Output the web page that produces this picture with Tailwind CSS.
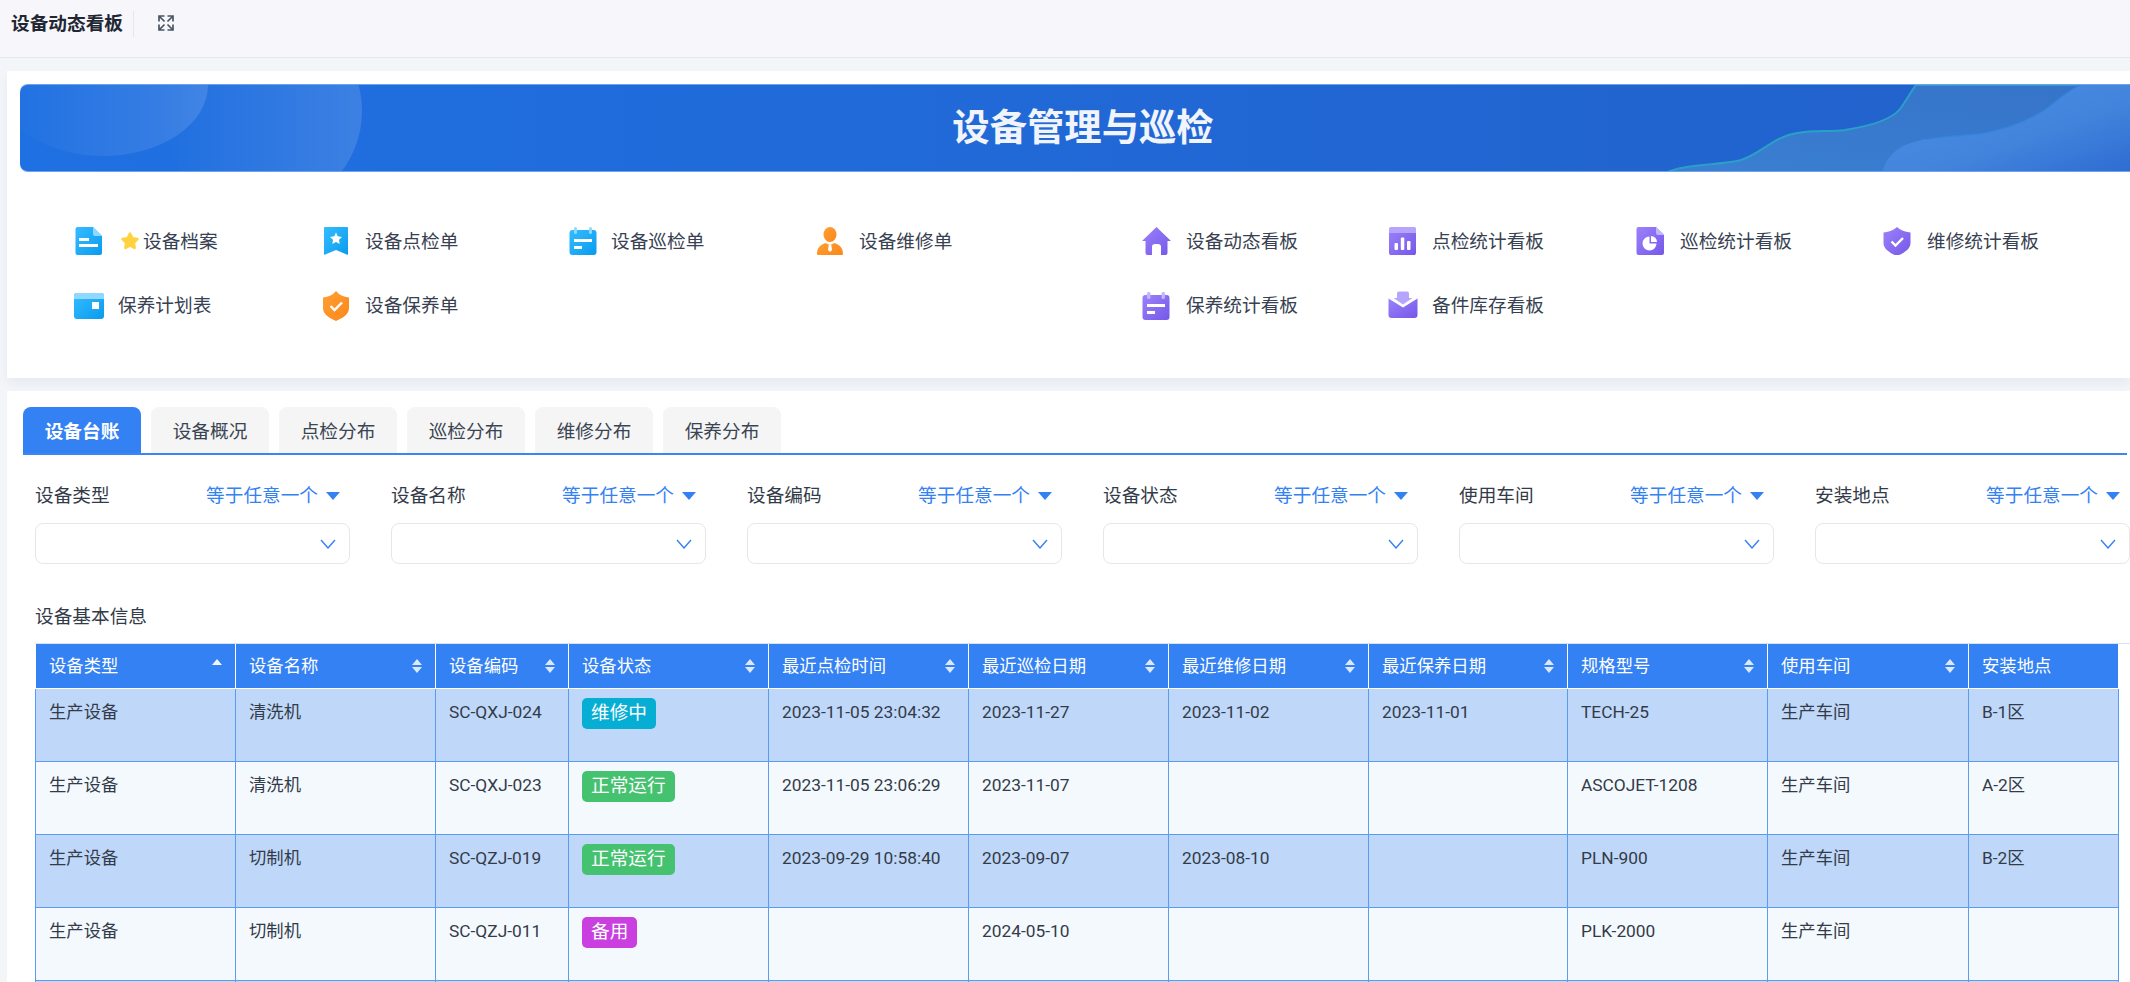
<!DOCTYPE html>
<html lang="zh">
<head>
    <meta charset="UTF-8">
    <title>设备动态看板</title>
    <script src="https://cdn.jsdelivr.net/npm/@tailwindcss/browser@4"></script>
</head>
<body class="w-[2130px] h-[982px] overflow-hidden bg-[#f4f5f9] text-[18.67px] text-[#333b48] font-['Roboto','Noto_Sans_CJK_SC',sans-serif]">
    <!-- shared gradients for the nav icons -->
    <svg class="absolute w-0 h-0">
        <defs>
            <linearGradient id="blue" x1="0" y1="0" x2="1" y2="1"><stop offset="0" stop-color="#35bcff"/><stop offset="1" stop-color="#0a9bee"/></linearGradient>
            <linearGradient id="purple" x1="0" y1="0" x2="1" y2="1"><stop offset="0" stop-color="#9c82fb"/><stop offset="1" stop-color="#7557e8"/></linearGradient>
            <linearGradient id="orange" x1="0" y1="0" x2="1" y2="1"><stop offset="0" stop-color="#ffa032"/><stop offset="1" stop-color="#fb871c"/></linearGradient>
            <linearGradient id="glow" x1="0" y1="0" x2="1" y2="0"><stop offset="0" stop-color="#fff" stop-opacity="0"/><stop offset="1" stop-color="#fff" stop-opacity="0.13"/></linearGradient>
            <linearGradient id="wave1" x1="0" y1="1" x2="1" y2="0"><stop offset="0" stop-color="#3a80d2"/><stop offset="1" stop-color="#3673c8"/></linearGradient>
            <linearGradient id="wave2" x1="0" y1="0" x2="1" y2="1"><stop offset="0" stop-color="#4d8fe4"/><stop offset="0.6" stop-color="#4283dc"/><stop offset="1" stop-color="#2e6cd2"/></linearGradient>
        </defs>
    </svg>

    <header class="h-[58px] bg-[#f6f6fb] border-b border-[#e6e7ec] flex items-start pt-[11px] pl-[11px]">
        <h1 class="h-[26px] leading-[26px] font-bold text-[#1f2733] pr-[10px] border-r border-[#e5e7eb]">设备动态看板</h1>
        <button class="ml-[24px] mt-[4px] w-[16px] h-[16px]">
            <svg viewBox="0 0 16 16" class="w-[16px] h-[16px]" fill="none" stroke="#4b5563" stroke-width="1.700">
                <path d="M1 6.500V1h5.500M1 1l5.500 5.500M9.500 1H15v5.500M15 1L9.500 6.500M1 9.500V15h5.500M1 15l5.500-5.500M15 9.500V15H9.500M15 15L9.500 9.500"/>
            </svg>
        </button>
    </header>

    <main class="pl-[7px] pt-[13px]">
        <section class="h-[307px] bg-white pl-[13px] pt-[13px] shadow-[0_6px_10px_rgba(30,40,80,0.05)]">
            <div class="relative h-[88px] rounded-l-[8px] overflow-hidden border-t border-b border-[#6ea2ea] bg-gradient-to-r from-[#1f70e2] to-[#2261cb] flex items-center justify-center pl-[16px] pt-[2px]">
                <svg class="absolute left-0 top-0 w-[2110px] h-[88px]" viewBox="20 84 2110 88">
                    <ellipse cx="103" cy="84" rx="105" ry="71" fill="url(#glow)"/>
                    <circle cx="262" cy="110" r="100" fill="url(#glow)"/>
                    <path d="M1666 172C1680 163 1725 164 1741 159C1760 153 1775 135 1797 132C1815 129 1830 131 1845 129C1870 125 1892 118 1900 108C1906 100 1910 92 1916 84H2130V172z" fill="url(#wave1)" stroke="#2aa0c8" stroke-width="2"/>
                    <path d="M1882 172C1888 152 1900 143 1926 138C1945 134 1965 134 1982 132C2015 126 2040 114 2058 98C2066 92 2072 88 2079 84H2130V172z" fill="url(#wave2)"/>
                    <path d="M1926 138C1945 134 1965 134 1982 132C2015 126 2040 114 2058 98C2066 92 2072 88 2079 84" fill="none" stroke="#2a7fd8" stroke-opacity="0.5" stroke-width="2"/>
                </svg>
                <h2 class="relative text-[37.33px] font-bold text-[#f1f4fa]">设备管理与巡检</h2>
            </div>

            <nav class="mt-[36px] flex pl-[55px] h-[130px] text-[#374151]">
                <div class="w-[1067px] grid grid-cols-[247px_247px_247px_247px] auto-rows-[65px]">
                    <a class="flex items-center">
                        <svg viewBox="0 0 28 28" class="w-[28px] h-[28px] mr-[15px]">
                            <path d="M2.500 0H18L27 9V26a2 2 0 0 1-2 2H2.500a2 2 0 0 1-2-2V2a2 2 0 0 1 2-2z" fill="url(#blue)"/>
                            <path d="M18 0L27 9H20a2 2 0 0 1-2-2z" fill="#8fd8ff"/>
                            <rect x="4" y="11" width="10" height="3" fill="#fff"/><rect x="4" y="17" width="19" height="3" fill="#fff"/>
                        </svg>
                        <svg viewBox="0.500 0.500 17 17" class="w-[18px] h-[18px] ml-[3px] mr-[4px]">
                            <path d="M9 2L11.200 6.500L16 7.200L12.500 10.600L13.300 15.500L9 13.200L4.700 15.500L5.500 10.600L2 7.200L6.800 6.500z" fill="#ffd23f" stroke="#ffd23f" stroke-width="2.500" stroke-linejoin="round"/>
                        </svg>
                        <span class="pt-[2px]">设备档案</span>
                    </a>
                    <a class="flex items-center">
                        <svg viewBox="0 0 28 28" class="w-[28px] h-[28px] mr-[15px]">
                            <path d="M3 0H25a1 1 0 0 1 1 1V28L14 23L2 28V1a1 1 0 0 1 1-1z" fill="url(#blue)"/>
                            <path d="M14 5.500L15.800 9.300L20 9.900L17 12.800L17.700 17L14 15L10.300 17L11 12.800L8 9.900L12.200 9.300z" fill="#fff"/>
                        </svg>
                        <span class="pt-[2px]">设备点检单</span>
                    </a>
                    <a class="flex items-center">
                        <svg viewBox="0 0 28 28" class="w-[28px] h-[28px] mr-[14px]">
                            <rect x="0.500" y="3" width="27" height="25" rx="3" fill="url(#blue)"/>
                            <rect x="5" y="0" width="3" height="7" rx="1.500" fill="#8fd8ff"/><rect x="20" y="0" width="3" height="7" rx="1.500" fill="#8fd8ff"/>
                            <rect x="5" y="12" width="18" height="3" fill="#fff"/><rect x="5" y="19" width="8" height="3" fill="#fff"/>
                        </svg>
                        <span class="pt-[2px]">设备巡检单</span>
                    </a>
                    <a class="flex items-center">
                        <svg viewBox="0 0 28 28" class="w-[28px] h-[28px] mr-[15px]">
                            <ellipse cx="14" cy="7.500" rx="6.500" ry="7.500" fill="url(#orange)"/>
                            <path d="M1 27C1 21 4 18 9.500 16L14 18L18.500 16C24 18 27 21 27 27a1 1 0 0 1-1 1H2a1 1 0 0 1-1-1z" fill="url(#orange)"/>
                            <path d="M12.800 17.500h2.400l.8 5.500L14 25L12 23z" fill="#fff"/>
                        </svg>
                        <span class="pt-[2px]">设备维修单</span>
                    </a>
                    <a class="flex items-center">
                        <svg viewBox="0 0 28 28" class="w-[28px] h-[28px] mr-[15px] overflow-visible">
                            <rect x="-1" y="1" width="30" height="26" rx="3" fill="url(#blue)"/>
                            <path d="M-1 7V4a3 3 0 0 1 3-3H26a3 3 0 0 1 3 3V7z" fill="#8fd8ff"/>
                            <rect x="17" y="10" width="7" height="7" fill="#fff"/>
                        </svg>
                        <span class="pt-[1px]">保养计划表</span>
                    </a>
                    <a class="flex items-center">
                        <svg viewBox="0 0 28 28" class="w-[28px] h-[28px] mr-[15px] overflow-visible">
                            <path d="M14 -1L17 2C19.500 4 23 5 27 5.500V16C27 22 21 26 14 29C7 26 1 22 1 16V5.500C5 5 8.500 4 11 2z" fill="url(#orange)"/>
                            <path d="M8.500 14L12.500 18L20 10.500" fill="none" stroke="#fff" stroke-width="2.400"/>
                        </svg>
                        <span class="pt-[1px]">设备保养单</span>
                    </a>
                </div>
                <div class="grid grid-cols-[247px_247px_247px_247px] auto-rows-[65px]">
                    <a class="flex items-center">
                        <svg viewBox="0 0 28 28" class="w-[28px] h-[28px] mr-[16px] overflow-visible">
                            <path d="M14.500 0L29 14h-3.500v12a2 2 0 0 1-2 2H19V20a3 3 0 0 0-3-3h-3a3 3 0 0 0-3 3v8H5.500a2 2 0 0 1-2-2V14H0z" fill="url(#purple)"/>
                        </svg>
                        <span class="pt-[2px]">设备动态看板</span>
                    </a>
                    <a class="flex items-center">
                        <svg viewBox="0 0 28 28" class="w-[28px] h-[28px] mr-[15px]">
                            <rect x="0" y="0" width="27" height="28.500" rx="3" fill="url(#purple)"/>
                            <path d="M0 6V3a3 3 0 0 1 3-3H24a3 3 0 0 1 3 3V6z" fill="#b7a5fd"/>
                            <rect x="5.500" y="16" width="3.500" height="7" rx="1" fill="#fff"/><rect x="11.800" y="10.500" width="3.500" height="12.500" rx="1" fill="#fff"/><rect x="18" y="14" width="3.500" height="9" rx="1" fill="#fff"/>
                        </svg>
                        <span class="pt-[2px]">点检统计看板</span>
                    </a>
                    <a class="flex items-center">
                        <svg viewBox="0 0 28 28" class="w-[28px] h-[28px] mr-[16px]">
                            <path d="M2.500 0H20L28 8V26a2 2 0 0 1-2 2H2.500a2 2 0 0 1-2-2V2a2 2 0 0 1 2-2z" fill="url(#purple)"/>
                            <path d="M20 0L28 8H22a2 2 0 0 1-2-2z" fill="#c3b5fe"/>
                            <path d="M13.500 9.500V16.500H20.500A7 7 0 1 1 13.500 9.500z" fill="#fff"/>
                            <path d="M15 9V15H21A6 6 0 0 0 15 9z" fill="#fff"/>
                        </svg>
                        <span class="pt-[2px]">巡检统计看板</span>
                    </a>
                    <a class="flex items-center">
                        <svg viewBox="0 0 28 28" class="w-[28px] h-[28px] mr-[16px]">
                            <path d="M14 0L16.500 2C19.500 4 23 5 27.500 5.500V16C27.500 22 21 26 14 29C7 26 .500 22 .500 16V5.500C5 5 8.500 4 11.500 2z" fill="url(#purple)"/>
                            <path d="M8.500 14.500L12.500 18.500L20 11" fill="none" stroke="#fff" stroke-width="2.400"/>
                        </svg>
                        <span class="pt-[2px]">维修统计看板</span>
                    </a>
                    <a class="flex items-center">
                        <svg viewBox="0 0 28 28" class="w-[28px] h-[28px] mr-[16px]">
                            <rect x="0.500" y="3" width="27" height="25" rx="3" fill="url(#purple)"/>
                            <rect x="5" y="0" width="3.500" height="7" rx="1.500" fill="#c3b5fe"/><rect x="19.500" y="0" width="3.500" height="7" rx="1.500" fill="#c3b5fe"/>
                            <rect x="5" y="12" width="18" height="3" fill="#fff"/><rect x="5" y="19" width="8" height="3" fill="#fff"/>
                        </svg>
                        <span class="pt-[1px]">保养统计看板</span>
                    </a>
                    <a class="flex items-center">
                        <svg viewBox="0 0 28 28" class="w-[28px] h-[28px] mr-[15px] overflow-visible">
                            <path d="M-.500 6.500L14 15.500L28.500 6.500V23a3 3 0 0 1-3 3H2.500a3 3 0 0 1-3-3z" fill="url(#purple)"/>
                            <path d="M8 1.500a2 2 0 0 1 2-2h8a2 2 0 0 1 2 2V6h3.500L14 12.500L4.500 6H8z" fill="#b7a5fd"/>
                        </svg>
                        <span class="pt-[1px]">备件库存看板</span>
                    </a>
                </div>
            </nav>
        </section>

        <section class="mt-[13px] h-[600px] bg-white pt-[16px]">
            <div class="ml-[16px] mr-[3px] flex gap-[10px] h-[48px] border-b-2 border-[#3a86f2]">
                <button class="w-[118px] h-[46px] pt-[3px] rounded-t-[8px] bg-[#3381f3] text-white font-bold">设备台账</button>
                <button class="w-[118px] h-[46px] pt-[3px] rounded-t-[8px] bg-[#f5f5f5] text-[#3a4452]">设备概况</button>
                <button class="w-[118px] h-[46px] pt-[3px] rounded-t-[8px] bg-[#f5f5f5] text-[#3a4452]">点检分布</button>
                <button class="w-[118px] h-[46px] pt-[3px] rounded-t-[8px] bg-[#f5f5f5] text-[#3a4452]">巡检分布</button>
                <button class="w-[118px] h-[46px] pt-[3px] rounded-t-[8px] bg-[#f5f5f5] text-[#3a4452]">维修分布</button>
                <button class="w-[118px] h-[46px] pt-[3px] rounded-t-[8px] bg-[#f5f5f5] text-[#3a4452]">保养分布</button>
            </div>

            <div class="ml-[28px] mt-[29px] flex gap-[41px]">
                <div class="w-[315px] shrink-0">
                    <div class="flex justify-between items-center h-[24px] pr-[10px]"><span>设备类型</span><span class="flex items-center text-[#3381f3]">等于任意一个<svg viewBox="0 0 14 8" class="w-[14px] h-[8px] ml-[8px]"><path d="M0 0H14L7 8z" fill="#3381f3"/></svg></span></div>
                    <div class="mt-[15px] h-[41px] rounded-[8px] border border-[#e5e7eb] flex items-center justify-end pr-[13px]"><svg viewBox="0 0 16 10" class="w-[16px] h-[10px]" fill="none" stroke="#3381f3" stroke-width="1.400"><path d="M1 1L8 9L15 1"/></svg></div>
                </div>
                <div class="w-[315px] shrink-0">
                    <div class="flex justify-between items-center h-[24px] pr-[10px]"><span>设备名称</span><span class="flex items-center text-[#3381f3]">等于任意一个<svg viewBox="0 0 14 8" class="w-[14px] h-[8px] ml-[8px]"><path d="M0 0H14L7 8z" fill="#3381f3"/></svg></span></div>
                    <div class="mt-[15px] h-[41px] rounded-[8px] border border-[#e5e7eb] flex items-center justify-end pr-[13px]"><svg viewBox="0 0 16 10" class="w-[16px] h-[10px]" fill="none" stroke="#3381f3" stroke-width="1.400"><path d="M1 1L8 9L15 1"/></svg></div>
                </div>
                <div class="w-[315px] shrink-0">
                    <div class="flex justify-between items-center h-[24px] pr-[10px]"><span>设备编码</span><span class="flex items-center text-[#3381f3]">等于任意一个<svg viewBox="0 0 14 8" class="w-[14px] h-[8px] ml-[8px]"><path d="M0 0H14L7 8z" fill="#3381f3"/></svg></span></div>
                    <div class="mt-[15px] h-[41px] rounded-[8px] border border-[#e5e7eb] flex items-center justify-end pr-[13px]"><svg viewBox="0 0 16 10" class="w-[16px] h-[10px]" fill="none" stroke="#3381f3" stroke-width="1.400"><path d="M1 1L8 9L15 1"/></svg></div>
                </div>
                <div class="w-[315px] shrink-0">
                    <div class="flex justify-between items-center h-[24px] pr-[10px]"><span>设备状态</span><span class="flex items-center text-[#3381f3]">等于任意一个<svg viewBox="0 0 14 8" class="w-[14px] h-[8px] ml-[8px]"><path d="M0 0H14L7 8z" fill="#3381f3"/></svg></span></div>
                    <div class="mt-[15px] h-[41px] rounded-[8px] border border-[#e5e7eb] flex items-center justify-end pr-[13px]"><svg viewBox="0 0 16 10" class="w-[16px] h-[10px]" fill="none" stroke="#3381f3" stroke-width="1.400"><path d="M1 1L8 9L15 1"/></svg></div>
                </div>
                <div class="w-[315px] shrink-0">
                    <div class="flex justify-between items-center h-[24px] pr-[10px]"><span>使用车间</span><span class="flex items-center text-[#3381f3]">等于任意一个<svg viewBox="0 0 14 8" class="w-[14px] h-[8px] ml-[8px]"><path d="M0 0H14L7 8z" fill="#3381f3"/></svg></span></div>
                    <div class="mt-[15px] h-[41px] rounded-[8px] border border-[#e5e7eb] flex items-center justify-end pr-[13px]"><svg viewBox="0 0 16 10" class="w-[16px] h-[10px]" fill="none" stroke="#3381f3" stroke-width="1.400"><path d="M1 1L8 9L15 1"/></svg></div>
                </div>
                <div class="w-[315px] shrink-0">
                    <div class="flex justify-between items-center h-[24px] pr-[10px]"><span>安装地点</span><span class="flex items-center text-[#3381f3]">等于任意一个<svg viewBox="0 0 14 8" class="w-[14px] h-[8px] ml-[8px]"><path d="M0 0H14L7 8z" fill="#3381f3"/></svg></span></div>
                    <div class="mt-[15px] h-[41px] rounded-[8px] border border-[#e5e7eb] flex items-center justify-end pr-[13px]"><svg viewBox="0 0 16 10" class="w-[16px] h-[10px]" fill="none" stroke="#3381f3" stroke-width="1.400"><path d="M1 1L8 9L15 1"/></svg></div>
                </div>
            </div>

            <h3 class="ml-[28px] mt-[41px] h-[24px] leading-[24px] font-normal">设备基本信息</h3>

            <div class="ml-[28px] mt-[14px] border-t border-[#d6e4f8]">
            <table class="table-fixed border-collapse w-[2083px] text-[17.33px] leading-[24px] [&_th]:h-[44px] [&_th]:px-[13px] [&_th]:bg-[#3381f3] [&_th]:border [&_th]:border-white [&_th]:border-t-0 [&_th]:text-white [&_th]:font-normal [&_th]:text-left [&_td]:h-[73px] [&_td]:px-[13px] [&_td]:pt-[11px] [&_td]:align-top [&_td]:border [&_td]:border-[#5b9bf0] [&_tbody_tr:nth-child(odd)]:bg-[#bfd7f9] [&_tbody_tr:nth-child(even)]:bg-[#f4f9fe]">
                <colgroup>
                    <col class="w-[200px]"><col class="w-[200px]"><col class="w-[133px]"><col class="w-[200px]"><col class="w-[200px]"><col class="w-[200px]"><col class="w-[200px]"><col class="w-[199px]"><col class="w-[200px]"><col class="w-[201px]"><col class="w-[150px]">
                </colgroup>
                <thead>
                    <tr>
                        <th><div class="flex justify-between items-center">设备类型<svg viewBox="0 0 10 14" class="w-[10px] h-[14px]"><path d="M5 0L10 6H0z" fill="#f1f6fe"/></svg></div></th>
                        <th><div class="flex justify-between items-center">设备名称<svg viewBox="0 0 10 14" class="w-[10px] h-[14px]"><path d="M5 0L10 6H0zM5 14L0 8H10z" fill="#dbe8fb"/></svg></div></th>
                        <th><div class="flex justify-between items-center">设备编码<svg viewBox="0 0 10 14" class="w-[10px] h-[14px]"><path d="M5 0L10 6H0zM5 14L0 8H10z" fill="#dbe8fb"/></svg></div></th>
                        <th><div class="flex justify-between items-center">设备状态<svg viewBox="0 0 10 14" class="w-[10px] h-[14px]"><path d="M5 0L10 6H0zM5 14L0 8H10z" fill="#dbe8fb"/></svg></div></th>
                        <th><div class="flex justify-between items-center">最近点检时间<svg viewBox="0 0 10 14" class="w-[10px] h-[14px]"><path d="M5 0L10 6H0zM5 14L0 8H10z" fill="#dbe8fb"/></svg></div></th>
                        <th><div class="flex justify-between items-center">最近巡检日期<svg viewBox="0 0 10 14" class="w-[10px] h-[14px]"><path d="M5 0L10 6H0zM5 14L0 8H10z" fill="#dbe8fb"/></svg></div></th>
                        <th><div class="flex justify-between items-center">最近维修日期<svg viewBox="0 0 10 14" class="w-[10px] h-[14px]"><path d="M5 0L10 6H0zM5 14L0 8H10z" fill="#dbe8fb"/></svg></div></th>
                        <th><div class="flex justify-between items-center">最近保养日期<svg viewBox="0 0 10 14" class="w-[10px] h-[14px]"><path d="M5 0L10 6H0zM5 14L0 8H10z" fill="#dbe8fb"/></svg></div></th>
                        <th><div class="flex justify-between items-center">规格型号<svg viewBox="0 0 10 14" class="w-[10px] h-[14px]"><path d="M5 0L10 6H0zM5 14L0 8H10z" fill="#dbe8fb"/></svg></div></th>
                        <th><div class="flex justify-between items-center">使用车间<svg viewBox="0 0 10 14" class="w-[10px] h-[14px]"><path d="M5 0L10 6H0zM5 14L0 8H10z" fill="#dbe8fb"/></svg></div></th>
                        <th>安装地点</th>
                    </tr>
                </thead>
                <tbody>
                    <tr>
                        <td>生产设备</td><td>清洗机</td><td>SC-QXJ-024</td>
                        <td><span class="block w-fit -mt-[2px] h-[31px] leading-[31px] px-[9px] rounded-[5px] bg-[#06aed4] text-white text-[18.67px]">维修中</span></td>
                        <td>2023-11-05 23:04:32</td><td>2023-11-27</td><td>2023-11-02</td><td>2023-11-01</td><td>TECH-25</td><td>生产车间</td><td>B-1区</td>
                    </tr>
                    <tr>
                        <td>生产设备</td><td>清洗机</td><td>SC-QXJ-023</td>
                        <td><span class="block w-fit -mt-[2px] h-[31px] leading-[31px] px-[9px] rounded-[5px] bg-[#45c26f] text-white text-[18.67px]">正常运行</span></td>
                        <td>2023-11-05 23:06:29</td><td>2023-11-07</td><td></td><td></td><td>ASCOJET-1208</td><td>生产车间</td><td>A-2区</td>
                    </tr>
                    <tr>
                        <td>生产设备</td><td>切制机</td><td>SC-QZJ-019</td>
                        <td><span class="block w-fit -mt-[2px] h-[31px] leading-[31px] px-[9px] rounded-[5px] bg-[#45c26f] text-white text-[18.67px]">正常运行</span></td>
                        <td>2023-09-29 10:58:40</td><td>2023-09-07</td><td>2023-08-10</td><td></td><td>PLN-900</td><td>生产车间</td><td>B-2区</td>
                    </tr>
                    <tr>
                        <td>生产设备</td><td>切制机</td><td>SC-QZJ-011</td>
                        <td><span class="block w-fit -mt-[2px] h-[31px] leading-[31px] px-[9px] rounded-[5px] bg-[#c93fe0] text-white text-[18.67px]">备用</span></td>
                        <td></td><td>2024-05-10</td><td></td><td></td><td>PLK-2000</td><td>生产车间</td><td></td>
                    </tr>
                    <tr>
                        <td></td><td></td><td></td><td></td><td></td><td></td><td></td><td></td><td></td><td></td><td></td>
                    </tr>
                </tbody>
            </table>
            </div>
        </section>
    </main>
</body>
</html>
